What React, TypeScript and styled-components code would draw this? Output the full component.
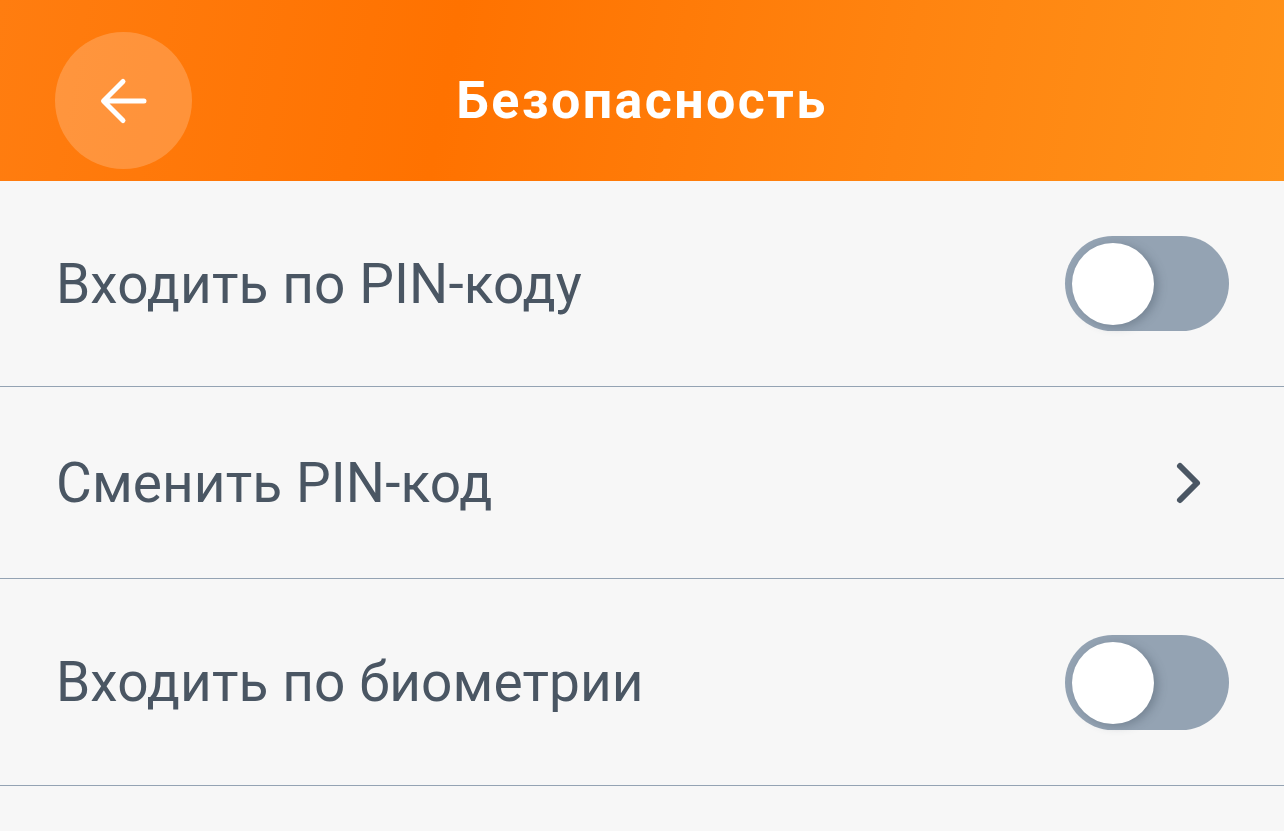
import React, { useState } from "react";
import styled, { createGlobalStyle } from "styled-components";

const GlobalStyle = createGlobalStyle`
  html, body {
    margin: 0;
    padding: 0;
    background: #f7f7f7;
    font-family: Roboto, "Liberation Sans", sans-serif;
  }
`;

const App = () => {
  const [pin, setPin] = useState(false);
  const [bio, setBio] = useState(false);

  return (
    <>
      <GlobalStyle />
      <Header>
        <BackButton aria-label="Назад">
          <svg width="52" height="52" viewBox="0 0 52 52" fill="none">
            <path
              d="M46 26H6.5M25 6.5L5.5 26L25 45.5"
              stroke="#fff"
              strokeWidth="5"
              strokeLinecap="round"
              strokeLinejoin="round"
            />
          </svg>
        </BackButton>
        <Title>Безопасность</Title>
        <span />
      </Header>
      <List>
        <Row height={206}>
          <Label>Входить по PIN-коду</Label>
          <Toggle on={pin} onClick={() => setPin(!pin)}>
            <Knob on={pin} />
          </Toggle>
        </Row>
        <Row height={192}>
          <Label>Сменить PIN-код</Label>
          <Chevron width="30" height="44" viewBox="0 0 30 44" fill="none">
            <path
              d="M7 5L24 22L7 39"
              stroke="#4a5663"
              strokeWidth="6"
              strokeLinecap="round"
              strokeLinejoin="round"
            />
          </Chevron>
        </Row>
        <Row height={207}>
          <Label>Входить по биометрии</Label>
          <Toggle on={bio} onClick={() => setBio(!bio)}>
            <Knob on={bio} />
          </Toggle>
        </Row>
      </List>
    </>
  );
};

const Header = styled.header`
  display: grid;
  grid-template-columns: 1fr auto 1fr;
  align-items: center;
  height: 181px;
  padding: 20px 55px 0;
  box-sizing: border-box;
  background: linear-gradient(100deg, #ff7d10 0%, #ff7200 35%, #ff8410 70%, #ff9219 100%);
`;

const BackButton = styled.button`
  width: 137px;
  height: 137px;
  border: none;
  border-radius: 50%;
  background: rgba(255, 255, 255, 0.2);
  display: flex;
  align-items: center;
  justify-content: center;
  padding: 0;
  cursor: pointer;
`;

const Title = styled.h1`
  margin: 0;
  color: #fff;
  font-size: 52px;
  font-weight: 700;
  letter-spacing: 2.4px;
`;

const List = styled.div`
  display: flex;
  flex-direction: column;
`;

const Row = styled.div<{ height: number }>`
  display: flex;
  align-items: center;
  justify-content: space-between;
  height: ${(p) => p.height}px;
  padding: 0 55px 0 56px;
  box-sizing: border-box;
  border-bottom: 1.5px solid #94a3b3;
`;

const Label = styled.span`
  font-size: 55px;
  color: #4a5663;
  letter-spacing: 0.1px;
`;

const Toggle = styled.div<{ on: boolean }>`
  position: relative;
  width: 164px;
  height: 95px;
  border-radius: 48px;
  background: ${(p) => (p.on ? "#ff7a00" : "#94a3b3")};
  cursor: pointer;
  flex-shrink: 0;
`;

const Knob = styled.div<{ on: boolean }>`
  position: absolute;
  top: 7px;
  left: ${(p) => (p.on ? "75px" : "7px")};
  width: 82px;
  height: 82px;
  border-radius: 50%;
  background: #fff;
  box-shadow: 4px 2px 10px rgba(60, 75, 90, 0.35);
`;

const Chevron = styled.svg`
  margin-right: 26px;
`;

export default App;
